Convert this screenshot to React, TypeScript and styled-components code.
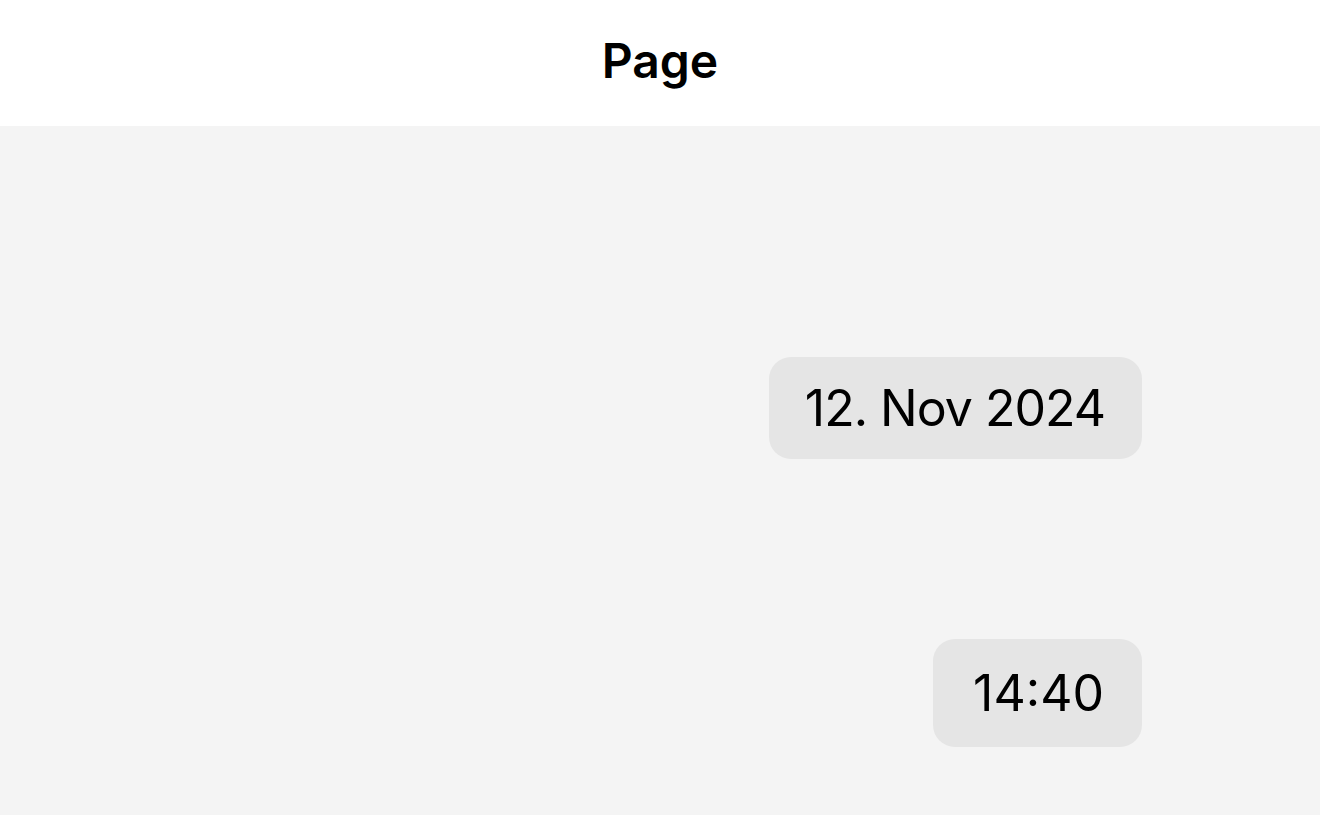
import styled, { createGlobalStyle } from "styled-components";

const GlobalStyle = createGlobalStyle`
  html, body {
    margin: 0;
    padding: 0;
    background: #f4f4f4;
  }
  #root {
    min-height: 100vh;
    display: flex;
    flex-direction: column;
  }
`;

const Header = styled.header`
  height: 126px;
  box-sizing: border-box;
  padding-bottom: 6px;
  background: #ffffff;
  display: flex;
  align-items: center;
  justify-content: center;
  font-family: Inter, "Liberation Sans", sans-serif;
  font-weight: 600;
  font-size: 48px;
  color: #000;
`;

const Feed = styled.main`
  flex: 1;
  background: #f4f4f4;
  display: flex;
  flex-direction: column;
  align-items: flex-end;
  padding: 231px 178px 0 0;
  gap: 180px;
`;

const Bubble = styled.div<{ $time?: boolean }>`
  background: #e5e5e5;
  border-radius: 22px;
  padding: ${(p) => (p.$time ? "0 38px 0 40px" : "0 37px 0 36px")};
  height: ${(p) => (p.$time ? "108px" : "102px")};
  display: flex;
  align-items: center;
  font-family: Inter, "Open Sans", sans-serif;
  font-size: 50px;
  letter-spacing: ${(p) => (p.$time ? "0" : "-1px")};
  color: #000;
`;

export default function App() {
  return (
    <>
      <GlobalStyle />
      <Header>Page</Header>
      <Feed>
        <Bubble>12. Nov 2024</Bubble>
        <Bubble $time>14:40</Bubble>
      </Feed>
    </>
  );
}
